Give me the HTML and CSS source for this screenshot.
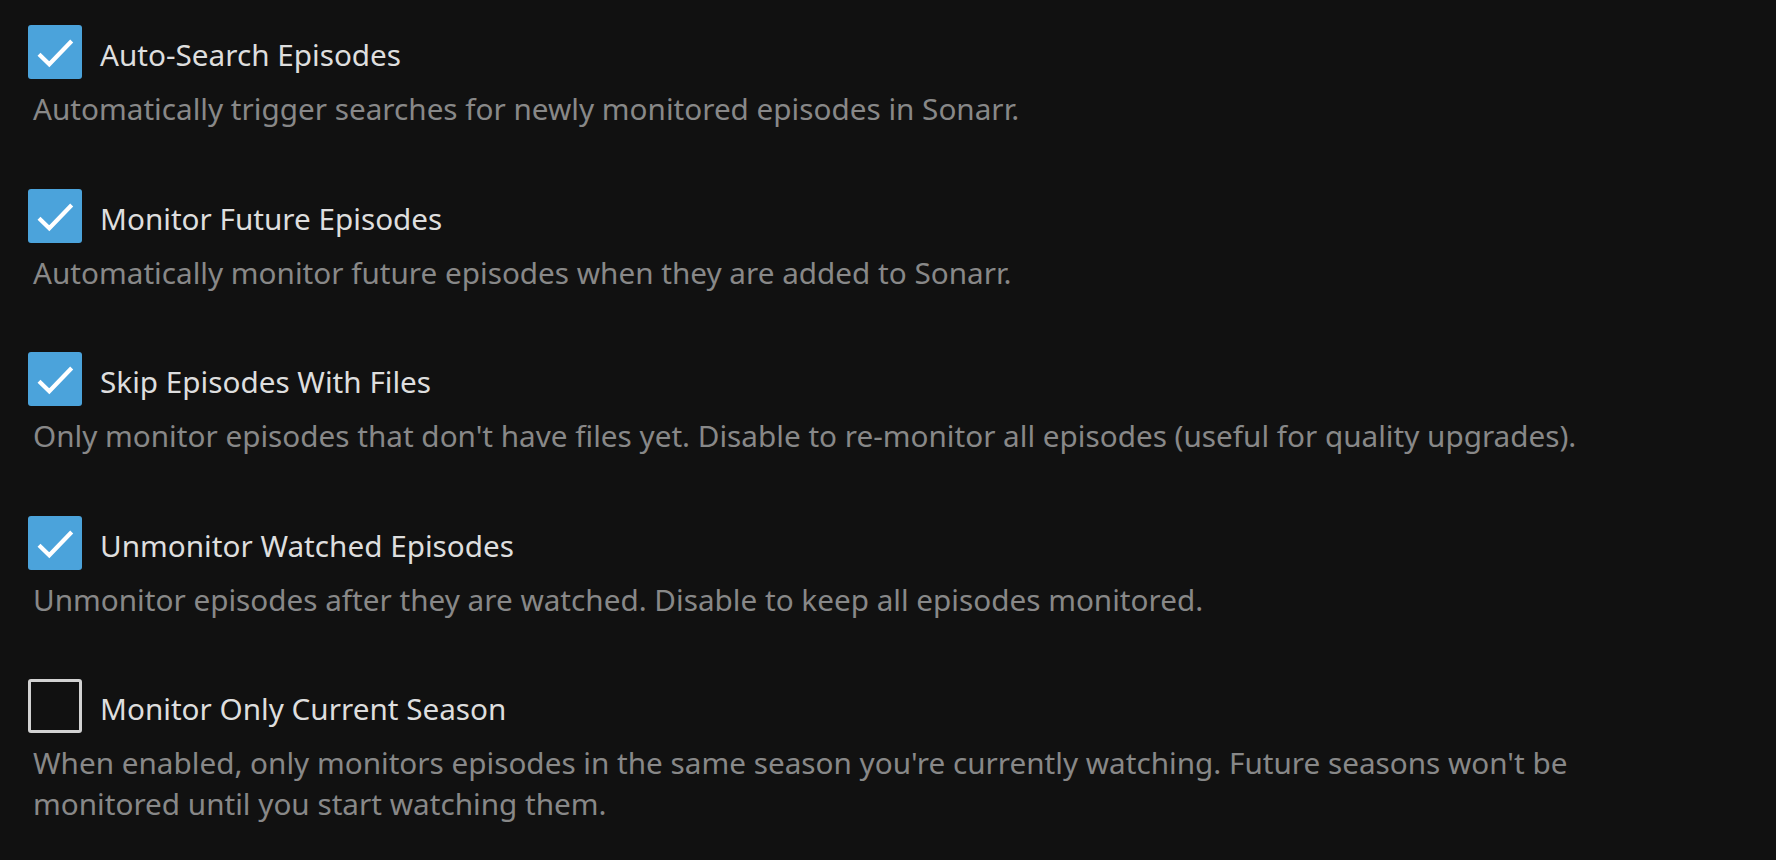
FILE: index.html
```html
<!DOCTYPE html>
<html lang="en">
<head>
<meta charset="utf-8">
<title>Settings</title>
<link rel="stylesheet" href="styles.css">
</head>
<body>
<div class="settings">
  <div class="option">
    <div class="option-row">
      <span class="box checked"><svg viewBox="0 0 54 54" width="54" height="54"><path d="M11 29.3 L21.3 39.3 L43.7 16" fill="none" stroke="#fff" stroke-width="4.2" stroke-linecap="butt" stroke-linejoin="miter"/></svg></span>
      <span class="title">Auto-Search Episodes</span>
    </div>
    <p class="desc">Automatically trigger searches for newly monitored episodes in Sonarr.</p>
  </div>
  <div class="option">
    <div class="option-row">
      <span class="box checked"><svg viewBox="0 0 54 54" width="54" height="54"><path d="M11 29.3 L21.3 39.3 L43.7 16" fill="none" stroke="#fff" stroke-width="4.2" stroke-linecap="butt" stroke-linejoin="miter"/></svg></span>
      <span class="title">Monitor Future Episodes</span>
    </div>
    <p class="desc">Automatically monitor future episodes when they are added to Sonarr.</p>
  </div>
  <div class="option">
    <div class="option-row">
      <span class="box checked"><svg viewBox="0 0 54 54" width="54" height="54"><path d="M11 29.3 L21.3 39.3 L43.7 16" fill="none" stroke="#fff" stroke-width="4.2" stroke-linecap="butt" stroke-linejoin="miter"/></svg></span>
      <span class="title">Skip Episodes With Files</span>
    </div>
    <p class="desc">Only monitor episodes that don't have files yet. Disable to re-monitor all episodes (useful for quality upgrades).</p>
  </div>
  <div class="option">
    <div class="option-row">
      <span class="box checked"><svg viewBox="0 0 54 54" width="54" height="54"><path d="M11 29.3 L21.3 39.3 L43.7 16" fill="none" stroke="#fff" stroke-width="4.2" stroke-linecap="butt" stroke-linejoin="miter"/></svg></span>
      <span class="title">Unmonitor Watched Episodes</span>
    </div>
    <p class="desc">Unmonitor episodes after they are watched. Disable to keep all episodes monitored.</p>
  </div>
  <div class="option">
    <div class="option-row">
      <span class="box"></span>
      <span class="title">Monitor Only Current Season</span>
    </div>
    <p class="desc">When enabled, only monitors episodes in the same season you're currently watching. Future seasons won't be monitored until you start watching them.</p>
  </div>
</div>
</body>
</html>
```

FILE: styles.css
```css
html, body {
  margin: 0;
  padding: 0;
  background: #111111;
  height: 100%;
}
body {
  font-family: "Noto Sans", "Open Sans", sans-serif;
  font-size: 29.7px;
}
.settings {
  display: flex;
  flex-direction: column;
  gap: 59px;
  padding: 25px 0 0 28px;
}
.option {
  display: flex;
  flex-direction: column;
}
.option-row {
  display: flex;
  align-items: center;
  gap: 18px;
  height: 54px;
}
.box {
  box-sizing: border-box;
  width: 54px;
  height: 54px;
  flex: none;
  border-radius: 3px;
  border: 3px solid #d2d2d2;
  display: block;
}
.box.checked {
  border: none;
  background: #4ba3db;
}
.box svg {
  display: block;
}
.title {
  color: #dedede;
  line-height: 40px;
  padding-top: 6px;
}
.desc {
  margin: 10px 0 0 0;
  padding-left: 5px;
  color: #888888;
  line-height: 40.5px;
  max-width: 1600px;
}
```
